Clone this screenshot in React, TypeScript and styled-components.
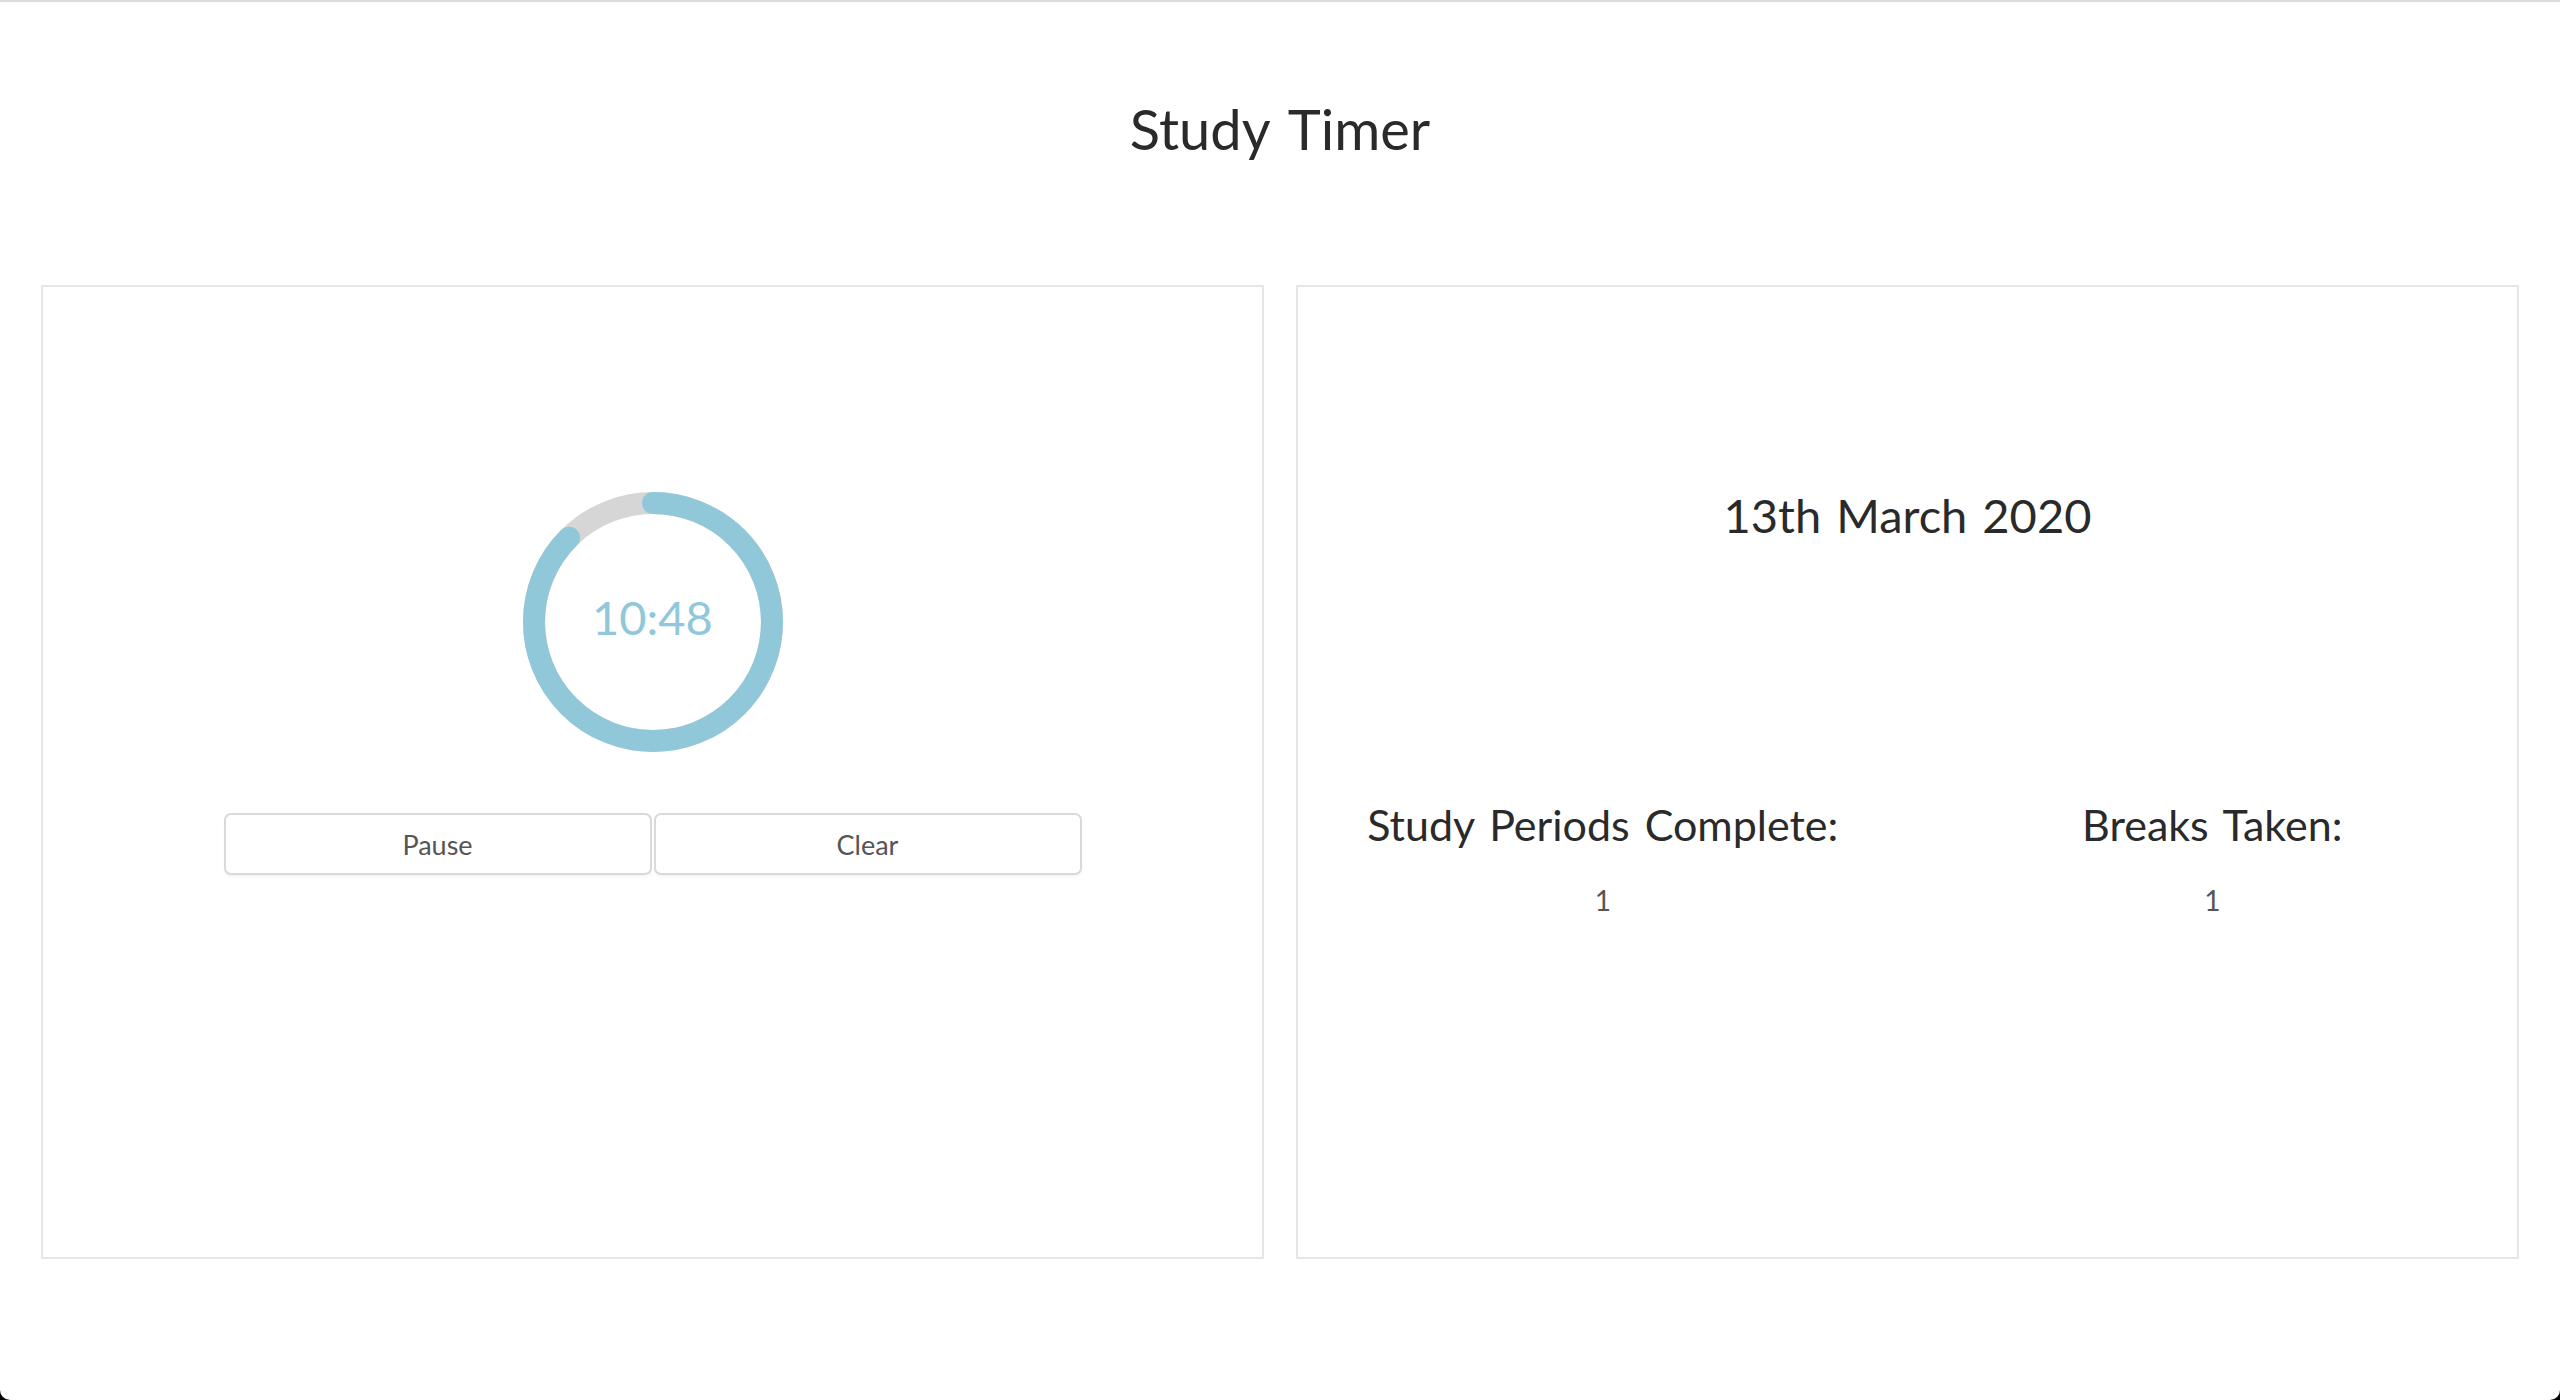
import React from "react"
import styled, { createGlobalStyle } from "styled-components"

const GlobalStyle = createGlobalStyle`
  html {
    background: #000;
  }
  body {
    margin: 0;
    font-family: 'Lato', 'Liberation Sans', sans-serif;
    color: #2a2a2a;
  }
`

const Page = styled.div`
  min-height: 100vh;
  box-sizing: border-box;
  background: #fff;
  border-top: 2px solid #dcdce0;
  border-radius: 0 0 10px 10px;
  padding: 0 41px;
`

const Title = styled.h1`
  margin: 0;
  padding-top: 92px;
  height: 283px;
  box-sizing: border-box;
  text-align: center;
  font-weight: 400;
  font-size: 56px;
  line-height: 70px;
  word-spacing: 6px;
  color: #2a2a2a;
`

const Panels = styled.main`
  display: grid;
  grid-template-columns: 1fr 1fr;
  column-gap: 32px;
`

const Panel = styled.section`
  height: 974px;
  box-sizing: border-box;
  border: 2px solid #e6e6e6;
  display: flex;
  flex-direction: column;
  align-items: center;
`

const TimerPanel = styled(Panel)`
  padding-top: 205px;
`

const Ring = styled.div`
  position: relative;
  width: 260px;
  height: 260px;
`

const RingTime = styled.span`
  position: absolute;
  inset: 0;
  display: flex;
  justify-content: center;
  align-items: center;
  padding-bottom: 10px;
  box-sizing: border-box;
  font-size: 47px;
  font-weight: 400;
  color: #90c8da;
`

const Controls = styled.div`
  display: flex;
  gap: 2px;
  margin-top: 61px;
`

const Button = styled.button`
  width: 428px;
  height: 62px;
  box-sizing: border-box;
  background: #fff;
  border: 2px solid #d9d9d9;
  border-radius: 7px;
  box-shadow: 0 2px 2px rgba(0, 0, 0, 0.04);
  font-family: 'Lato', 'Liberation Sans', sans-serif;
  font-size: 27px;
  color: #555;
  cursor: pointer;
`

const StatsPanel = styled(Panel)`
  padding-top: 198px;
`

const DateLabel = styled.h2`
  margin: 0;
  font-weight: 400;
  font-size: 47px;
  line-height: 60px;
  word-spacing: 3px;
  color: #2a2a2a;
`

const Stats = styled.div`
  width: 100%;
  display: grid;
  grid-template-columns: 1fr 1fr;
  margin-top: 252px;
`

const Stat = styled.div`
  display: flex;
  flex-direction: column;
  align-items: center;
`

const StatLabel = styled.h3`
  margin: 0;
  font-weight: 400;
  font-size: 43px;
  line-height: 56px;
  word-spacing: 4px;
  color: #2a2a2a;
`

const StatValue = styled.span`
  margin-top: 30px;
  font-size: 28px;
  color: #555;
`

const RADIUS = 119
const CIRC = 2 * Math.PI * RADIUS

function ProgressRing({ progress, time }: { progress: number; time: string }) {
  return (
    <Ring>
      <svg width="260" height="260" viewBox="0 0 260 260">
        <circle cx="130" cy="130" r={RADIUS} fill="none" stroke="#d6d6d6" strokeWidth="22" />
        <circle
          cx="130"
          cy="130"
          r={RADIUS}
          fill="none"
          stroke="#90c8da"
          strokeWidth="22"
          strokeLinecap="round"
          strokeDasharray={`${CIRC * progress} ${CIRC}`}
          transform="rotate(-90 130 130)"
        />
      </svg>
      <RingTime>{time}</RingTime>
    </Ring>
  )
}

export default function App() {
  return (
    <>
      <GlobalStyle />
      <Page>
        <Title>Study Timer</Title>
        <Panels>
          <TimerPanel>
            <ProgressRing progress={0.875} time="10:48" />
            <Controls>
              <Button>Pause</Button>
              <Button>Clear</Button>
            </Controls>
          </TimerPanel>
          <StatsPanel>
            <DateLabel>13th March 2020</DateLabel>
            <Stats>
              <Stat>
                <StatLabel>Study Periods Complete:</StatLabel>
                <StatValue>1</StatValue>
              </Stat>
              <Stat>
                <StatLabel>Breaks Taken:</StatLabel>
                <StatValue>1</StatValue>
              </Stat>
            </Stats>
          </StatsPanel>
        </Panels>
      </Page>
    </>
  )
}
